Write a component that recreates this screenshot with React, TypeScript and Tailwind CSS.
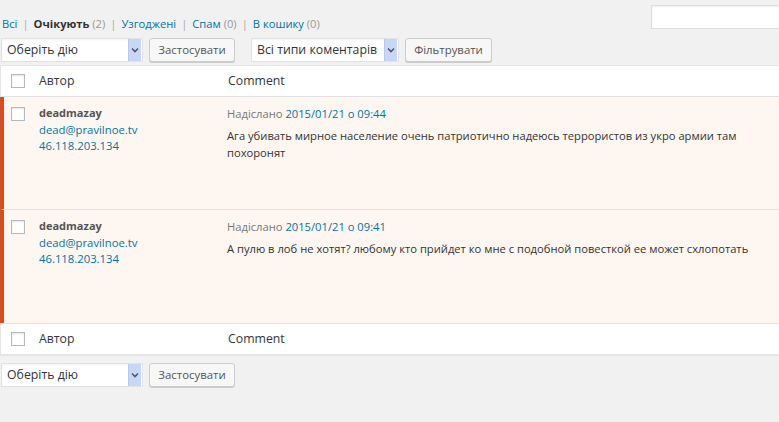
import React from "react";

const font = { fontFamily: '"Open Sans", "Noto Sans", sans-serif' };

const Checkbox = () => (
  <span className="block w-[14px] h-[14px] bg-white border border-[#b4b9be] shadow-[inset_0_1px_2px_rgba(0,0,0,0.1)]" />
);

const FakeSelect = ({ label, width }: { label: string; width: string }) => (
  <div
    className={`${width} h-6 flex items-center bg-white border border-[#e2e2e2] shadow-[inset_0_1px_2px_rgba(0,0,0,0.05)]`}
  >
    <span className="flex-1 pl-[5px] text-[12.3px] text-[#333] whitespace-nowrap overflow-hidden">{label}</span>
    <span className="w-[13px] h-[22px] mr-px flex items-center justify-center bg-[#c8d7f6] border-l border-[#b9c9ee]">
      <svg width="8" height="6" viewBox="0 0 8 6">
        <path d="M1 1.5 L4 4.5 L7 1.5" stroke="#4a5a7a" strokeWidth="1.6" fill="none" />
      </svg>
    </span>
  </div>
);

const Button = ({ label, width }: { label: string; width: string }) => (
  <button
    className={`${width} h-6 rounded-[3px] border border-[#cccccc] bg-[#f7f7f7] text-[11.4px] text-[#555] shadow-[0_1px_0_#cccccc] leading-none`}
  >
    {label}
  </button>
);

const comments = [
  {
    date: "2015/01/21 о 09:44",
    text: "Ага убивать мирное население очень патриотично надеюсь террористов из укро армии там похоронят",
    height: "h-[113px]",
  },
  {
    date: "2015/01/21 о 09:41",
    text: "А пулю в лоб не хотят? любому кто прийдет ко мне с подобной повесткой ее может схлопотать",
    height: "h-[113px]",
  },
];

const HeaderRow = () => (
  <div className="h-[30px] flex items-center bg-white">
    <div className="w-[38px] pl-[10px] shrink-0">
      <Checkbox />
    </div>
    <div className="w-[189px] shrink-0 text-[12.3px] text-[#32373c]">Автор</div>
    <div className="text-[12.3px] text-[#32373c]">Comment</div>
  </div>
);

const Sep = () => <span className="mx-[5px] text-[#aaa]">|</span>;

export default function App() {
  return (
    <div style={font} className="w-[779px] h-[422px] overflow-hidden bg-[#f1f1f1] text-[11.2px] text-[#444]">
      {/* views + search */}
      <div className="h-[38px] flex items-start">
        <ul className="flex items-center pl-[2px] pt-[15px] text-[11.2px] text-[#666] leading-[18px]">
          <li>
            <span className="text-[#0074a2]">Всі</span>
            <Sep />
          </li>
          <li>
            <span className="font-bold text-[#333]">Очікують</span>{" "}
            <span className="text-[#999]">(2)</span>
            <Sep />
          </li>
          <li>
            <span className="text-[#0074a2]">Узгоджені</span>
            <Sep />
          </li>
          <li>
            <span className="text-[#0074a2]">Спам</span> <span className="text-[#999]">(0)</span>
            <Sep />
          </li>
          <li>
            <span className="text-[#0074a2]">В кошику</span> <span className="text-[#999]">(0)</span>
          </li>
        </ul>
        <div className="ml-auto mt-[5px] w-[128px] h-6 bg-white border border-[#dddddd] border-r-0 shadow-[inset_0_1px_2px_rgba(0,0,0,0.07)]" />
      </div>

      {/* top tablenav */}
      <div className="flex items-center h-6 pl-px gap-[6px]">
        <FakeSelect label="Оберіть дію" width="w-[142px]" />
        <Button label="Застосувати" width="w-[86px]" />
        <div className="w-[4px]" />
        <FakeSelect label="Всі типи коментарів" width="w-[148px]" />
        <Button label="Фільтрувати" width="w-[87px]" />
      </div>

      {/* table */}
      <div className="mt-[3px] border-y border-l border-[#e5e5e5] shadow-[0_1px_1px_rgba(0,0,0,0.04)]">
        <div className="border-b border-[#e1e1e1]">
          <HeaderRow />
        </div>
        {comments.map((c, i) => (
          <div
            key={i}
            className={`${c.height} flex bg-[#fef7f1] border-l-4 border-[#d54e21] -ml-px ${
              i === 0 ? "border-b border-b-[#eae3dd]" : ""
            }`}
          >
            <div className="w-[35px] pl-[7px] pt-[10px] shrink-0">
              <Checkbox />
            </div>
            <div className="w-[188px] shrink-0 pt-[8px] leading-[16.5px] text-[11.3px]">
              <div className="font-bold text-[#555] text-[11px]">deadmazay</div>
              <div className="text-[#0074a2]">dead@pravilnoe.tv</div>
              <div className="text-[#0074a2]">46.118.203.134</div>
            </div>
            <div className="flex-1 pt-[8px] pr-4 text-[11.2px] leading-[17px]">
              <div className="text-[#777]">
                Надіслано <span className="text-[#0074a2]">{c.date}</span>
              </div>
              <p className="mt-[5px] text-[#333] w-[530px]">{c.text}</p>
            </div>
          </div>
        ))}
        <div className="border-t border-[#e1e1e1]">
          <HeaderRow />
        </div>
      </div>

      {/* bottom tablenav */}
      <div className="flex items-center h-6 pl-px gap-[6px] mt-[8px]">
        <FakeSelect label="Оберіть дію" width="w-[142px]" />
        <Button label="Застосувати" width="w-[86px]" />
      </div>
    </div>
  );
}
